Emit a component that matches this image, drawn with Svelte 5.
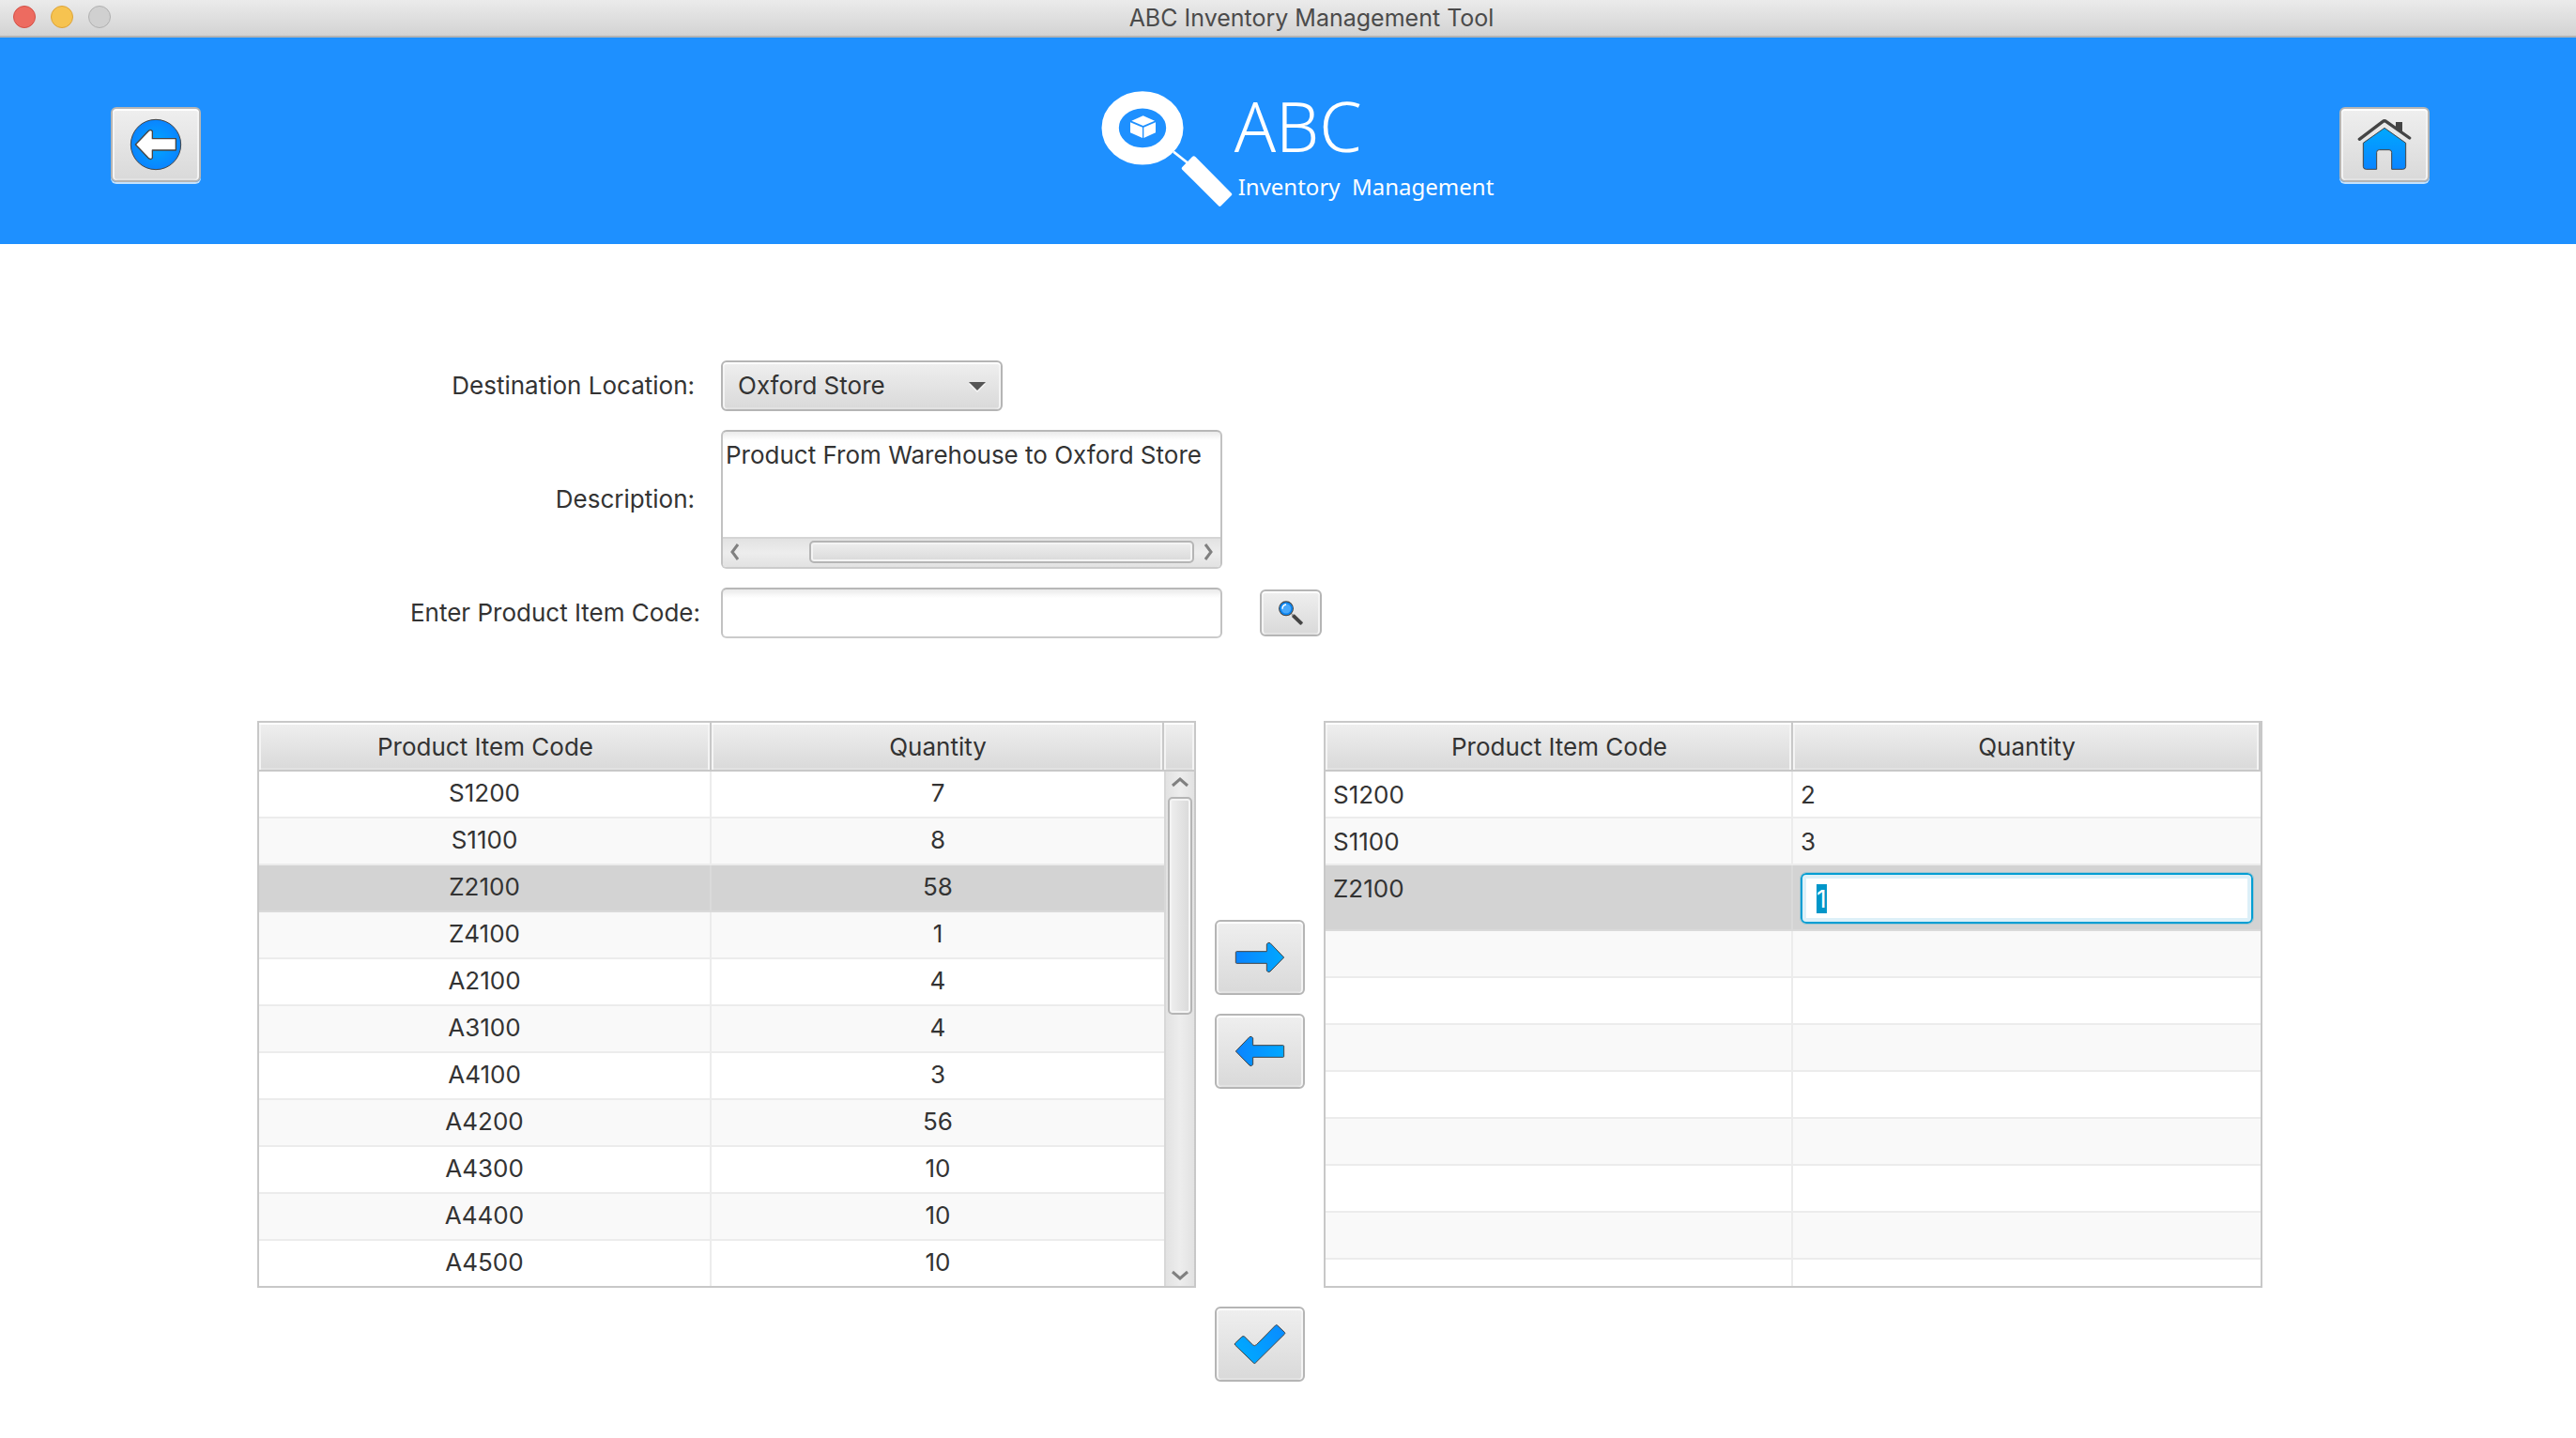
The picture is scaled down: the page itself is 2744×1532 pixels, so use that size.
<script>
  import { onMount } from 'svelte';

  const stock = [
    ['S1200', 7], ['S1100', 8], ['Z2100', 58], ['Z4100', 1], ['A2100', 4], ['A3100', 4],
    ['A4100', 3], ['A4200', 56], ['A4300', 10], ['A4400', 10], ['A4500', 10]
  ];
  const transfer = [['S1200', 2], ['S1100', 3]];
  const emptyRows = [0, 1, 2, 3, 4, 5, 6, 7];

  let location = $state('Oxford Store');
  let description = $state('Product From Warehouse to Oxford Store');
  let itemCode = $state('');
  let editing = $state('1');
  let editor;

  onMount(() => {
    editor.focus();
    editor.select();
  });
</script>

<svelte:head><title>ABC Inventory Management Tool</title></svelte:head>

<svg class="defs" width="0" height="0" aria-hidden="true">
  <defs>
    <linearGradient id="across" x1="0" x2="1" y1="0" y2="0">
      <stop offset="0" stop-color="#0a84ff" /><stop offset="1" stop-color="#00a8ff" />
    </linearGradient>
    <linearGradient id="down" x1="0" x2="0" y1="0" y2="1">
      <stop offset="0" stop-color="#00a8ff" /><stop offset="1" stop-color="#0a84ff" />
    </linearGradient>
    <linearGradient id="back" x1="0" x2="1" y1="0.5" y2="0">
      <stop offset="0" stop-color="#00a8ff" /><stop offset="1" stop-color="#0a8aff" />
    </linearGradient>
    <radialGradient id="disc">
      <stop offset="0" stop-color="#00a8ff" /><stop offset="1" stop-color="#0a84ff" />
    </radialGradient>
  </defs>
</svg>

<div class="titlebar">
  <div class="lights">
    <button class="light close" aria-label="Close window"></button>
    <button class="light minimise" aria-label="Minimise window"></button>
    <button class="light zoom" aria-label="Zoom window" disabled></button>
  </div>
  <div class="title">ABC Inventory Management Tool</div>
</div>

<header>
  <button class="btn large lit" aria-label="Back">
    <svg width="54" height="54" viewBox="417 381 162 162">
      <circle cx="498" cy="462" r="80" fill="url(#disc)" stroke="#444" stroke-width="3" />
      <path d="M433 462L474 419Q481 413 487 419V443H562V480H487V505Q481 512 474 505Z" fill="#fff" stroke="#444" stroke-width="4" stroke-linejoin="round" />
    </svg>
  </button>
  <div class="logo">
    <svg width="140" height="123" viewBox="102 294 420 369" aria-hidden="true">
      <ellipse cx="234" cy="409" rx="103" ry="90" fill="none" stroke="#fff" stroke-width="55" />
      <path d="M333 485L380 522" stroke="#fff" stroke-width="8" />
      <path d="M393 501Q398 496 403 501L518 617Q522 621 518 625L485 658Q481 662 477 658L361 542Q357 538 361 534Z" fill="#fff" />
      <path d="M236 370L273 386L236 402L199 386ZM195 391L234 407V441L195 424ZM238 407L276 391V424L238 441Z" fill="#fff" />
    </svg>
    <div class="words">
      <div class="name">ABC</div>
      <div class="tagline">Inventory  Management</div>
    </div>
  </div>
  <button class="btn large lit" aria-label="Home">
    <svg width="56" height="56" viewBox="156 108 168 168">
      <path d="M276 120H297V153L276 138Z" fill="#444" />
      <path d="M160 175L235 118Q240 114 245 118L320 171" fill="none" stroke="#444" stroke-width="10" stroke-linecap="round" />
      <path d="M240 139L308 187V262Q308 271 299 271H263V217Q263 209 255 209H223Q215 209 215 217V271H181Q172 271 172 262V187Z" fill="url(#down)" stroke="#444" stroke-width="3" stroke-linejoin="round" />
    </svg>
  </button>
</header>

<main>
  <form onsubmit={(e) => e.preventDefault()}>
    <label for="location">Destination Location:</label>
    <div class="combo">
      <select id="location" bind:value={location}>
        <option>Oxford Store</option>
        <option>Warehouse</option>
      </select>
      <svg width="18" height="9" viewBox="0 0 18 9" aria-hidden="true"><path d="M0 0H18L9 9Z" fill="#555" /></svg>
    </div>

    <label for="description">Description:</label>
    <div class="area">
      <textarea id="description" wrap="off" bind:value={description}></textarea>
      <div class="hbar" aria-hidden="true">
        <svg width="10" height="18" viewBox="0 0 10 18"><path d="M8 1L2 9L8 17" /></svg>
        <div class="hthumb"></div>
        <svg width="10" height="18" viewBox="0 0 10 18"><path d="M2 1L8 9L2 17" /></svg>
      </div>
    </div>

    <label class="wide" for="code">Enter Product Item Code:</label>
    <div class="search">
      <input id="code" type="text" bind:value={itemCode} />
      <button class="btn small" aria-label="Search">
        <svg width="26" height="26" viewBox="906 602 78 78">
          <path d="M948 645L981 677" stroke="#999" stroke-width="6" />
          <path d="M952 649L980 676" stroke="#444" stroke-width="12" />
          <circle cx="930" cy="627" r="22" fill="#48a8fb" stroke="#444" stroke-width="4" />
          <circle cx="930" cy="627" r="18" fill="none" stroke="#0a84f0" stroke-width="5" />
          <path d="M918 628Q918 616 930 614" fill="none" stroke="#fff" stroke-width="4" />
        </svg>
      </button>
    </div>
  </form>

  <div class="tables">
    <section class="panel stock">
      <table>
        <thead><tr><th>Product Item Code</th><th>Quantity</th></tr></thead>
        <tbody>
          {#each stock as [code, quantity]}
            <tr class:selected={code === 'Z2100'}><td>{code}</td><td>{quantity}</td></tr>
          {/each}
        </tbody>
      </table>
      <div class="side" aria-hidden="true">
        <div class="corner"></div>
        <div class="vbar">
          <svg width="18" height="10" viewBox="0 0 18 10"><path d="M1 9L9 2L17 9" /></svg>
          <div class="vthumb"></div>
          <svg class="end" width="18" height="10" viewBox="0 0 18 10"><path d="M1 1L9 8L17 1" /></svg>
        </div>
      </div>
    </section>

    <div class="moves">
      <button class="btn large" aria-label="Add to transfer">
        <svg width="52" height="32" viewBox="408 762 156 96">
          <path d="M412 791H508V768Q512 760 519 764L563 810L519 855Q512 860 508 852V829H412Q409 829 409 826V794Q409 791 412 791Z" fill="url(#across)" stroke="#444" stroke-width="3" />
        </svg>
      </button>
      <button class="btn large" aria-label="Remove from transfer">
        <svg width="52" height="32" viewBox="408 762 156 96">
          <path d="M560 791H464V768Q460 760 453 764L409 810L453 855Q460 860 464 852V829H560Q563 829 563 826V794Q563 791 560 791Z" fill="url(#across)" stroke="#444" stroke-width="3" />
        </svg>
      </button>
    </div>

    <section class="panel transfer">
      <table>
        <thead><tr><th>Product Item Code</th><th>Quantity</th></tr></thead>
        <tbody>
          {#each transfer as [code, quantity]}
            <tr><td>{code}</td><td>{quantity}</td></tr>
          {/each}
          <tr class="selected editing">
            <td>Z2100</td>
            <td><input type="text" aria-label="Quantity for Z2100" bind:value={editing} bind:this={editor} /></td>
          </tr>
          {#each emptyRows as row (row)}
            <tr class="empty"><td></td><td></td></tr>
          {/each}
        </tbody>
      </table>
    </section>

    <div class="confirm">
      <button class="btn large" aria-label="Confirm transfer">
        <svg width="54" height="42" viewBox="405 393 162 126">
          <path d="M407 453L428 433Q432 429 437 432L463 458Q469 464 475 458L536 396Q539 393 542 396L565 418Q568 421 565 424L472 516Q469 519 466 516L407 459Q404 456 407 453Z" fill="url(#back)" stroke="#444" stroke-width="3" />
        </svg>
      </button>
    </div>
  </div>
</main>

<style>
  :global(body) { background: #fff; }
  :global(#app) {
    font: 26px/32px Inter, 'Liberation Sans', sans-serif;
    color: #333;
  }
  *, *::before, *::after { box-sizing: border-box; }
  button, input, select, textarea { font: inherit; color: inherit; margin: 0; }
  svg { display: block; flex: none; overflow: visible; }
  .defs { position: absolute; }

  .titlebar {
    display: flex;
    height: 40px;
    background: linear-gradient(#ebebeb, #d3d3d3);
    border-bottom: 2px solid #b4b4b4;
  }
  .lights { display: flex; gap: 16px; padding: 6px 0 0 14px; }
  .light { width: 24px; height: 24px; padding: 0; border-radius: 50%; border: 1px solid; }
  .close { background: #ed6b60; border-color: #d35047; }
  .minimise { background: #f6c350; border-color: #dca33a; }
  .zoom { background: #d0d0d0; border-color: #b0b0b0; }
  .title { flex: 1; padding: 3px 68px 0 0; font-size: 25px; text-align: center; color: #4b4b4b; }

  header {
    display: grid;
    grid-template-columns: 1fr auto 1fr;
    align-items: start;
    height: 220px;
    padding: 0 156px 0 118px;
    background: #1e90ff;
  }
  header .btn { margin-top: 74px; }
  header .btn:last-child { justify-self: end; }
  .logo { display: flex; padding: 58px 0 0 58px; color: #fff; }
  .name { padding-left: 2px; font: 350 73px/72px 'Noto Sans', 'Open Sans', sans-serif; }
  .tagline { padding: 13px 0 0 6px; font: 24px/32px 'Noto Sans', sans-serif; white-space: pre; }

  .btn {
    display: flex;
    align-items: center;
    justify-content: center;
    padding: 0;
    border: 2px solid #b5b5b5;
    border-radius: 6px;
    background: linear-gradient(#efefef, #d9d9d9);
    box-shadow: inset 0 2px #fff, inset 2px 0 #f4f4f4, inset -2px 0 #f4f4f4, inset 0 -2px #e2e2e2;
  }
  .large { width: 96px; height: 80px; }
  .small { width: 66px; height: 50px; }
  .lit { box-shadow: inset 0 2px #fff, inset 2px 0 #f4f4f4, inset -2px 0 #f4f4f4, inset 0 -2px #e2e2e2, 0 2px #c5e2fc; }

  main { padding: 124px 334px 60px 274px; }
  form {
    display: grid;
    grid-template-columns: 494px 1fr;
    row-gap: 20px;
    align-items: center;
    justify-items: start;
  }
  label { justify-self: end; padding-right: 28px; }
  .wide { padding-right: 22px; }

  .combo { display: grid; align-items: center; width: 300px; }
  .combo > * { grid-area: 1 / 1; }
  .combo svg { justify-self: end; margin-right: 18px; pointer-events: none; filter: drop-shadow(0 2px 0 #f6f6f6); }
  select {
    appearance: none;
    width: 100%;
    height: 54px;
    padding: 0 16px;
    border: 2px solid #b5b5b5;
    border-radius: 6px;
    background: linear-gradient(#efefef, #d9d9d9);
    box-shadow: inset 0 2px #fff, inset 2px 0 #f4f4f4, inset -2px 0 #f4f4f4, inset 0 -2px #e2e2e2;
  }

  .area, #code {
    width: 534px;
    border: 2px solid #c8c8c8;
    border-color: #b7b7b7 #c2c2c2 #cbcbcb;
    border-radius: 6px;
    background: linear-gradient(#eaeaea, #fff 9px);
  }
  .area { height: 148px; display: flex; flex-direction: column; overflow: hidden; }
  textarea {
    flex: 1;
    min-height: 0;
    width: 100%;
    padding: 9px 3px;
    border: 0;
    outline: 0;
    resize: none;
    overflow: hidden;
    background: none;
  }
  .hbar {
    display: flex;
    align-items: flex-start;
    height: 32px;
    padding: 2px 8px 0;
    border-top: 2px solid #d4d4d4;
    background: linear-gradient(#e2e2e2, #ededed 50%, #e2e2e2);
  }
  .hbar svg { margin-top: 3px; }
  .hbar path, .vbar path { fill: none; stroke: #808080; stroke-width: 3; }
  .hthumb {
    flex: 1;
    height: 24px;
    margin: 0 10px 0 74px;
    border: 2px solid #b5b5b5;
    border-radius: 5px;
    background: linear-gradient(#efefef, #d9d9d9);
    box-shadow: inset 0 0 0 2px #f4f4f4;
  }
  .search { display: flex; align-items: flex-end; gap: 40px; }
  .small { margin-bottom: 2px; }
  #code { height: 54px; padding: 0 14px; outline: 0; }

  .tables {
    display: grid;
    grid-template-columns: 1fr 136px 1fr;
    row-gap: 20px;
    margin-top: 88px;
  }
  .panel { display: flex; border: 2px solid #c8c8c8; }
  .moves { display: flex; flex-direction: column; align-items: flex-start; gap: 20px; padding: 212px 0 0 20px; }
  .confirm { grid-column: 2; padding-left: 20px; }

  table { flex: 1; width: 100%; table-layout: fixed; border-collapse: separate; border-spacing: 0; }
  th, td { padding: 0; overflow: hidden; }
  th, .corner {
    height: 52px;
    font-weight: 400;
    border-bottom: 2px solid #c8c8c8;
    background: linear-gradient(#efefef, #d9d9d9);
    box-shadow: inset 0 2px #fff, inset 2px 0 #f4f4f4, inset -2px 0 #f4f4f4, inset 0 -2px #e2e2e2;
  }
  th { padding: 2px 0 0 2px; border-right: 2px solid #c8c8c8; }
  td { height: 50px; border-bottom: 2px solid #ececec; text-align: center; vertical-align: top; padding-top: 7px; }
  td:first-child { border-right: 2px solid #ececec; }
  tbody tr:nth-child(even) { background: #f9f9f9; }
  tbody tr.selected { background: #d3d3d3; }
  .selected td, .selected td:first-child { border-color: #dadada; }
  tbody tr:last-child td { height: 48px; border-bottom: 0; }
  .transfer td { text-align: left; padding: 9px 0 0 8px; }
  .transfer .editing td { height: 70px; }
  .transfer .editing td:last-child { padding: 8px 8px 0; }
  .transfer tr:last-child td { height: 28px; }
  .transfer td input {
    display: block;
    width: 100%;
    height: 54px;
    padding: 0 15px;
    border: 2px solid #039ed3;
    border-radius: 6px;
    outline: 1px solid #a3c6d1;
    background: #fff;
    box-shadow: inset 0 0 0 4px #ddf0f8;
  }
  input::selection { background: #0096c9; color: #fff; }

  .side { display: flex; flex-direction: column; width: 32px; }
  .vbar {
    flex: 1;
    display: flex;
    flex-direction: column;
    align-items: center;
    padding: 6px 0;
    border-left: 2px solid #d8d8d8;
    background: linear-gradient(90deg, #e2e2e2, #ededed 50%, #e2e2e2);
  }
  .vthumb {
    width: 26px;
    height: 232px;
    margin-top: 11px;
    border: 2px solid #b5b5b5;
    border-radius: 5px;
    background: linear-gradient(90deg, #efefef, #d9d9d9);
    box-shadow: inset 0 0 0 2px #f4f4f4;
  }
  .end { margin-top: auto; }
</style>
